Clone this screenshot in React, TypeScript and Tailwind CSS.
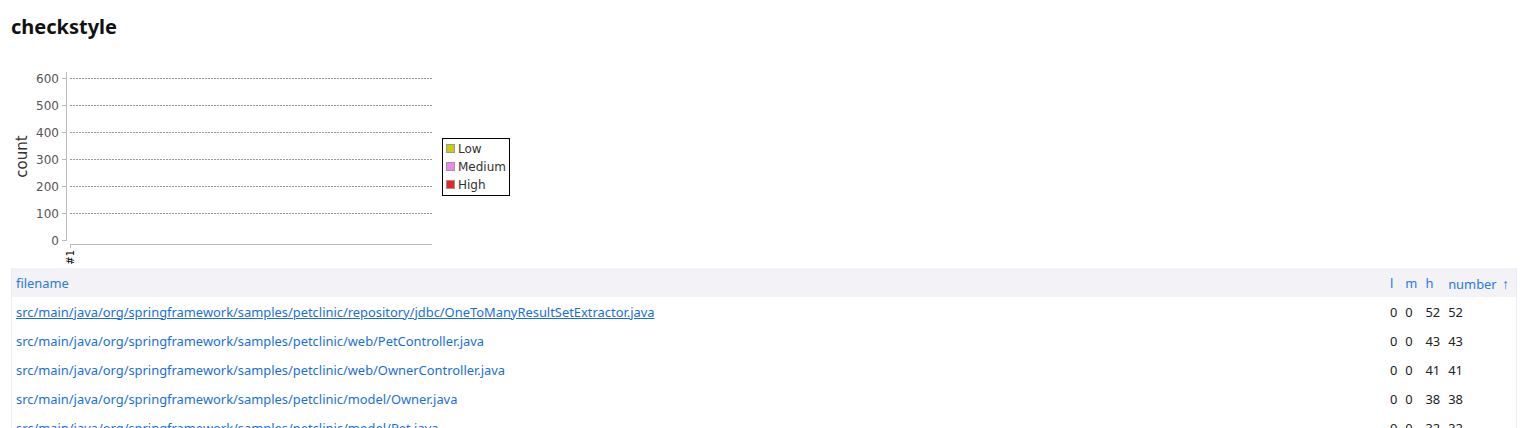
import React from "react";

const rows = [
  { f: "src/main/java/org/springframework/samples/petclinic/repository/jdbc/OneToManyResultSetExtractor.java", l: 0, m: 0, h: 52, n: 52, u: true },
  { f: "src/main/java/org/springframework/samples/petclinic/web/PetController.java", l: 0, m: 0, h: 43, n: 43 },
  { f: "src/main/java/org/springframework/samples/petclinic/web/OwnerController.java", l: 0, m: 0, h: 41, n: 41 },
  { f: "src/main/java/org/springframework/samples/petclinic/model/Owner.java", l: 0, m: 0, h: 38, n: 38 },
  { f: "src/main/java/org/springframework/samples/petclinic/model/Pet.java", l: 0, m: 0, h: 32, n: 32 },
];

function Chart() {
  const grid = [
    { v: "600", y: 28 },
    { v: "500", y: 55 },
    { v: "400", y: 82 },
    { v: "300", y: 109 },
    { v: "200", y: 136 },
    { v: "100", y: 163 },
  ];
  const font = "'DejaVu Sans', Verdana, sans-serif";
  return (
    <svg width="520" height="218" className="block" style={{ fontFamily: font }}>
      {grid.map((g) => (
        <g key={g.v}>
          <line x1="70" x2="432" y1={g.y + 0.5} y2={g.y + 0.5} stroke="#999" strokeDasharray="2 1" strokeWidth="1" />
          <line x1="62" x2="66" y1={g.y + 0.5} y2={g.y + 0.5} stroke="#bbb" />
          <text x="59" y={g.y + 4.5} textAnchor="end" fontSize="12" fill="#555">{g.v}</text>
        </g>
      ))}
      <line x1="62" x2="66" y1="190.5" y2="190.5" stroke="#bbb" />
      <text x="59" y="194.5" textAnchor="end" fontSize="12" fill="#555">0</text>
      <line x1="66.5" x2="66.5" y1="22" y2="191" stroke="#bbb" />
      <line x1="70" x2="432" y1="194.5" y2="194.5" stroke="#bbb" />
      <line x1="70.5" x2="70.5" y1="194" y2="198" stroke="#bbb" />
      <text transform="translate(74,200) rotate(-90)" textAnchor="end" fontSize="10" fill="#000">#1</text>
      <text transform="translate(27,106.5) rotate(-90)" textAnchor="middle" fontSize="15" fill="#333">count</text>
      <rect x="442.5" y="88.5" width="67" height="57" fill="white" stroke="#000" />
      <rect x="446.5" y="94.5" width="8" height="8" fill="#cccc00" stroke="#999" />
      <text x="458" y="103" fontSize="12" fill="#333">Low</text>
      <rect x="446.5" y="112.5" width="8" height="8" fill="#ee88ee" stroke="#999" />
      <text x="458" y="121" fontSize="12" fill="#333">Medium</text>
      <rect x="446.5" y="130.5" width="8" height="8" fill="#ee2222" stroke="#999" />
      <text x="458" y="139" fontSize="12" fill="#333">High</text>
    </svg>
  );
}

export default function App() {
  return (
    <div className="bg-white w-[1527px] h-[428px] overflow-hidden" style={{ fontFamily: "'Noto Sans', 'Open Sans', sans-serif" }}>
      <div className="px-[11px] h-[50px] pt-[13px]">
        <h1 className="text-[20px] leading-[28px] font-bold text-[#111]">checkstyle</h1>
      </div>
      <Chart />
      <div className="mx-[11px] w-[1506px] border-x border-[#eeeef2]">
        <table className="w-full border-collapse text-[12.9px]">
          <thead>
            <tr className="bg-[#f2f2f7] h-[29px] text-[#2a7ae2]">
              <th className="text-left font-normal pl-[4px] pt-[2px] w-full">filename</th>
              <th className="text-left font-normal px-[4px] pt-[2px]">l</th>
              <th className="text-left font-normal px-[4px] pt-[2px]">m</th>
              <th className="text-left font-normal px-[4px] pt-[2px]">h</th>
              <th className="text-left font-normal pl-[4px] pr-[7px] pt-[2px] whitespace-nowrap">
                number <span className="text-[14px] ml-[2px]">↑</span>
              </th>
            </tr>
          </thead>
          <tbody>
            {rows.map((r) => (
              <tr key={r.f} className="h-[29px]">
                <td className="pl-[4px] pt-[2px] whitespace-nowrap">
                  <a className={`text-[#1a6fe0] ${r.u ? "underline" : ""}`}>{r.f}</a>
                </td>
                <td className="px-[4px] pt-[2px] text-[#222]">{r.l}</td>
                <td className="px-[4px] pt-[2px] text-[#222]">{r.m}</td>
                <td className="px-[4px] pt-[2px] text-[#222]">{r.h}</td>
                <td className="pl-[4px] pr-[7px] pt-[2px] text-[#222]">{r.n}</td>
              </tr>
            ))}
          </tbody>
        </table>
      </div>
    </div>
  );
}
